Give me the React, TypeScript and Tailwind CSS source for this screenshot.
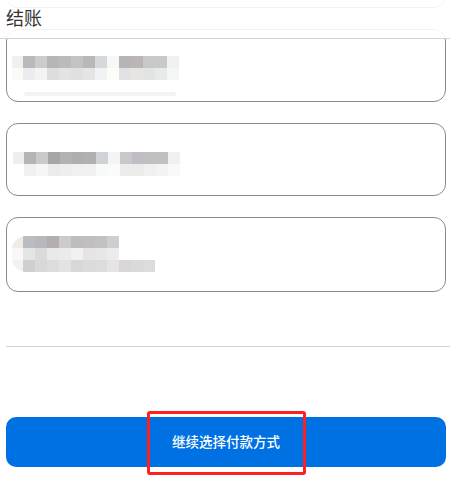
import React from "react";

const FONT = "font-['Noto_Sans','Noto_Sans_CJK_SC',sans-serif]";

// pixelated (mosaic) placeholder rows, first block is narrower
const card1 = [
  ["#f1f0ee", "#b9babc", "#cbcccd", "#b5b6b5", "#bbbbbb", "#c2c3c6", "#bab8b6", "#d5d9db", "#f7f7f7", "#b5b4b7", "#bcb5b5", "#c8c8c8", "#c8c8c8", "#f0f1f3"],
  ["#fafaf9", "#ebeced", "#f3f3f3", "#dcdedd", "#e3e3e3", "#e0e0e0", "#e5e5e5", "#f1f2f4", "#fcfcfb", "#e1e1e3", "#e7e4e2", "#e2e3e5", "#e8eaea", "#f4f5f5"],
];

const card2 = [
  ["#eeeeec", "#b3b4b8", "#c9cacc", "#a5a7a6", "#b2b2b2", "#adaeb2", "#b0b0ae", "#cfd3d7", "#f4f4f4", "#c8c8ca", "#c2bdc4", "#c2c0bf", "#c0c1bd", "#eef0f2"],
  ["#ffffff", "#f0f0f0", "#f6f6f6", "#ebebeb", "#f0eeec", "#f0f0f0", "#f0f0f0", "#f8f9f9", "#fbfbfb", "#ebebeb", "#ebebeb", "#f0f0f0", "#f3f3f4", "#f9f9f9"],
];

const card3 = [
  ["#f1ebe8", "#bbbcc1", "#b8b8bc", "#b2adb1", "#cccbc9", "#bebdbd", "#c0bebe", "#c4c1c3", "#cbcfd3"],
  ["#f8f8f6", "#e4e5e5", "#dadadb", "#e9e9ea", "#ebebed", "#f1f1f1", "#e6e4e5", "#e7e7e8", "#ebeceb"],
  ["#f2f2f0", "#cfcfd0", "#d8d8d8", "#dcdcde", "#e4e3e1", "#d7d7d6", "#dbdbde", "#dcdcdd", "#e5e3e3", "#d8d7d5", "#d8dadc", "#dcdcde"],
];

function Mosaic({ rows, round }: { rows: string[][]; round?: boolean }) {
  return (
    <div className={round ? "flex flex-col overflow-hidden rounded-l-[14px]" : "flex flex-col"}>
      {rows.map((row, r) => (
        <div key={r} className="flex h-[12px]">
          {row.map((c, i) => (
            <div
              key={i}
              className={i === 0 ? "h-full w-[11px]" : "h-full w-[12px]"}
              style={{ backgroundColor: c }}
            />
          ))}
        </div>
      ))}
    </div>
  );
}

export default function App() {
  return (
    <div className={`relative h-[481px] w-[450px] overflow-hidden bg-white ${FONT}`}>
      {/* header overlays the scrolled content */}
      <div className="absolute inset-x-0 top-0 z-10 h-[39px] border-b border-[#d2d2d7] bg-white/90 pl-[6px] pt-[7px]">
        <h1 className="text-[18px] leading-[22px] font-normal text-[#333]">结账</h1>
      </div>

      <div className="flex flex-col px-[6px] pr-[4px]">
        <div className="-mt-[40px] h-[48px] rounded-[12px] border border-[#8a8a8a]" />

        <div className="mt-[21px] h-[73px] rounded-[12px] border border-[#8a8a8a] pl-[5px] pt-[26px]">
          <Mosaic rows={card1} />
          <div className="ml-[12px] mt-[12px] h-[4px] w-[152px] rounded-full bg-[#f3f3f3]" />
        </div>

        <div className="mt-[21px] h-[73px] rounded-[12px] border border-[#8a8a8a] pl-[6px] pt-[28px]">
          <Mosaic rows={card2} />
        </div>

        <div className="mt-[21px] h-[75px] rounded-[12px] border border-[#8a8a8a] pl-[5px] pt-[18px]">
          <Mosaic rows={card3} round />
        </div>
      </div>

      <div className="ml-[6px] mt-[54px] h-px bg-[#d2d2d7]" />

      <div className="relative mx-[6px] mr-[4px] mt-[70px]">
        <button className="flex h-[50px] w-full items-center justify-center rounded-[10px] bg-[#0071e3] text-[13.5px] font-medium text-white">
          继续选择付款方式
        </button>
        <div className="pointer-events-none absolute -top-[6px] left-[141px] h-[64px] w-[159px] rounded-[3px] border-[3px] border-[#ff1f1f]" />
      </div>
    </div>
  );
}
